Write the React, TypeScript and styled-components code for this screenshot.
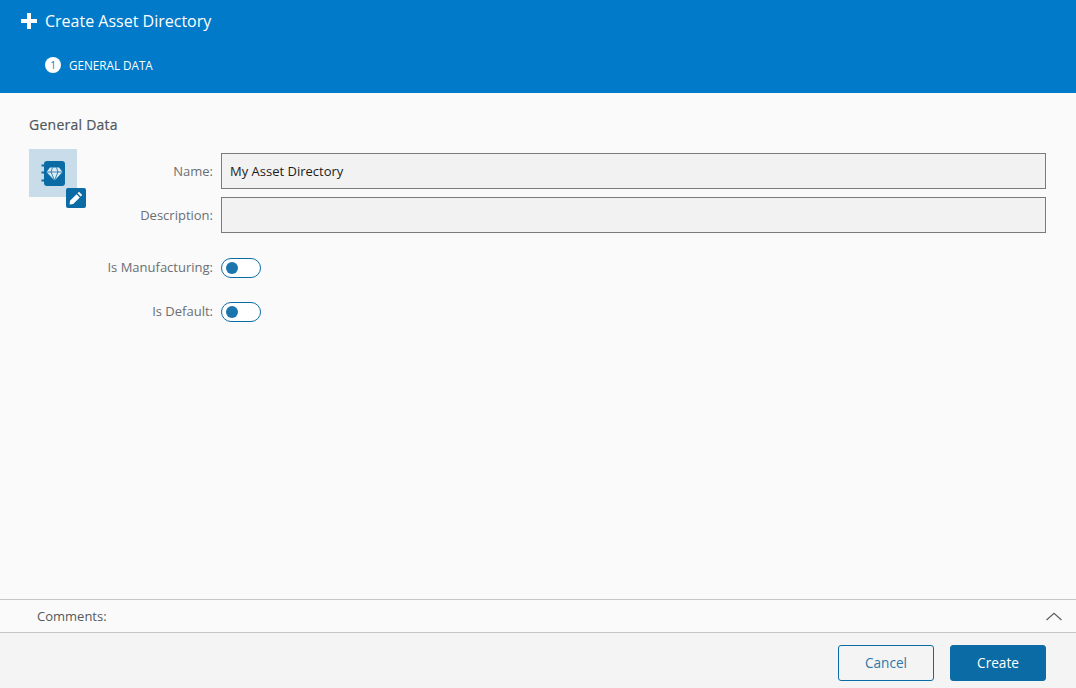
import React from "react";
import styled, { createGlobalStyle } from "styled-components";

const Global = createGlobalStyle`
  html, body { margin: 0; padding: 0; height: 100%; background: #fafafa; }
  #root { height: 100%; }
  * { box-sizing: border-box; }
`;

const Page = styled.div`
  width: 1076px;
  height: 688px;
  display: flex;
  flex-direction: column;
  overflow: hidden;
  font-family: "Open Sans", "Noto Sans", sans-serif;
  background: #fafafa;
  color: #50565a;
`;

const Header = styled.header`
  height: 93px;
  flex: none;
  background: #007ac9;
  color: #fff;
  padding: 10px 0 0 21px;
`;

const TitleRow = styled.div`
  display: flex;
  align-items: center;
  gap: 8px;
  height: 22px;
`;

const Title = styled.h1`
  margin: 0;
  font-size: 16px;
  font-weight: 400;
  line-height: 22px;
`;

const Steps = styled.div`
  display: flex;
  align-items: center;
  gap: 8px;
  margin: 23px 0 0 24px;
  height: 20px;
`;

const StepBadge = styled.span`
  width: 16px;
  height: 16px;
  border-radius: 50%;
  background: #fff;
  color: #007ac9;
  font-size: 10px;
  line-height: 16px;
  text-align: center;
`;

const StepLabel = styled.span`
  font-size: 11.7px;
  line-height: 16px;
`;

const Main = styled.main`
  flex: 1;
  padding: 23px 30px 0 29px;
`;

const SectionTitle = styled.h2`
  margin: 0 0 15px;
  font-size: 14px;
  line-height: 18px;
  font-weight: 500;
  letter-spacing: 0.25px;
  color: #50565a;
  -webkit-text-stroke: 0.2px #50565a;
`;

const FormLayout = styled.div`
  display: flex;
  align-items: flex-start;
`;

const IconBox = styled.div`
  position: relative;
  width: 48px;
  height: 48px;
  flex: none;
  background: #c8dce9;
  display: flex;
  align-items: center;
  justify-content: center;
`;

const EditBadge = styled.span`
  position: absolute;
  left: 37px;
  top: 39px;
  width: 20px;
  height: 20px;
  border-radius: 2px;
  background: #0b6ca5;
  display: flex;
  align-items: center;
  justify-content: center;
`;

const Fields = styled.div`
  flex: 1;
  display: grid;
  grid-template-columns: 136px 1fr;
  column-gap: 8px;
  padding-top: 4px;
`;

const Label = styled.label`
  font-size: 13px;
  line-height: 16px;
  text-align: right;
  align-self: center;
  color: #6a6f73;
`;

const InputLabel = styled(Label)`
  margin-bottom: 8px;
`;

const Input = styled.input`
  height: 36px;
  width: 100%;
  margin-bottom: 8px;
  border: 1px solid #7a7a7a;
  background: #f2f2f2;
  padding: 0 8px;
  font: 400 13px "Open Sans", sans-serif;
  color: #1c1c1c;
  outline: none;
`;

const ToggleCell = styled.div<{ $first?: boolean }>`
  height: 20px;
  margin: ${(p) => (p.$first ? "17px" : "24px")} 0 0;
`;

const ToggleLabel = styled(Label)<{ $first?: boolean }>`
  margin-top: ${(p) => (p.$first ? "17px" : "24px")};
  margin-bottom: 2px;
`;

const Toggle = styled.span`
  display: block;
  width: 40px;
  height: 20px;
  border: 1px solid #0b6ca5;
  border-radius: 10px;
  background: #fff;
  padding: 3px 4px;
`;

const Knob = styled.span`
  display: block;
  width: 12px;
  height: 12px;
  border-radius: 50%;
  background: #1a76ad;
`;

const CommentsBar = styled.div`
  height: 34px;
  flex: none;
  border-top: 1px solid #c6c6c6;
  border-bottom: 1px solid #c6c6c6;
  padding: 0 14px 0 37px;
  display: flex;
  align-items: center;
  justify-content: space-between;
  font-size: 13px;
  color: #55595c;
`;

const Footer = styled.footer`
  height: 55px;
  flex: none;
  background: #f4f4f4;
  display: flex;
  justify-content: flex-end;
  align-items: flex-start;
  gap: 16px;
  padding: 12px 30px 0 0;
`;

const Button = styled.button<{ $primary?: boolean }>`
  width: 96px;
  height: 36px;
  border-radius: 3px;
  border: 1px solid #0b6ca5;
  background: ${(p) => (p.$primary ? "#0b6ca5" : "transparent")};
  color: ${(p) => (p.$primary ? "#fff" : "#2c78a8")};
  font: 400 13.6px "Open Sans", sans-serif;
  padding: 0 0 2px;
`;

export default function App() {
  return (
    <Page>
      <Global />
      <Header>
        <TitleRow>
          <svg width="16" height="16" viewBox="0 0 16 16" aria-hidden="true">
            <path d="M6 0h4v6h6v4h-6v6H6v-6H0V6h6z" fill="#fff" />
          </svg>
          <Title>Create Asset Directory</Title>
        </TitleRow>
        <Steps>
          <StepBadge>1</StepBadge>
          <StepLabel>GENERAL DATA</StepLabel>
        </Steps>
      </Header>
      <Main>
        <SectionTitle>General Data</SectionTitle>
        <FormLayout>
          <IconBox>
            <svg width="24" height="25" viewBox="0 0 24 25" aria-hidden="true">
              <rect x="3" y="0" width="21" height="25" rx="3" fill="#0b6ca5" />
              <path d="M0.5 3.5h5v2h-5zM0.5 10.5h5v2h-5zM0.5 18.5h5v2h-5z" fill="#0b6ca5" />
              <path d="M9 6.5h9l3.5 4.5-8 8.5-8-8.5z" fill="#dcebf4" />
              <path d="M5.5 11h16M10 11l3.5 8.5L17 11M10 11l1.5-4.5M17 11l-1.5-4.5" stroke="#0b6ca5" strokeWidth="0.8" fill="none" />
            </svg>
            <EditBadge>
              <svg width="14" height="14" viewBox="0 0 14 14" aria-hidden="true">
                <path d="M10 .8l3.2 3.2-1.5 1.5-3.2-3.2zM7.6 3.2l3.2 3.2-6.6 6.6L.6 13.4l.4-3.6z" fill="#fff" />
              </svg>
            </EditBadge>
          </IconBox>
          <Fields>
            <InputLabel>Name:</InputLabel>
            <Input defaultValue="My Asset Directory" />
            <InputLabel>Description:</InputLabel>
            <Input />
            <ToggleLabel $first>Is Manufacturing:</ToggleLabel>
            <ToggleCell $first>
              <Toggle>
                <Knob />
              </Toggle>
            </ToggleCell>
            <ToggleLabel>Is Default:</ToggleLabel>
            <ToggleCell>
              <Toggle>
                <Knob />
              </Toggle>
            </ToggleCell>
          </Fields>
        </FormLayout>
      </Main>
      <CommentsBar>
        <span>Comments:</span>
        <svg width="16" height="9" viewBox="0 0 16 9" aria-hidden="true">
          <path d="M0.5 8L8 1.2 15.5 8" fill="none" stroke="#5a5f63" strokeWidth="1.2" />
        </svg>
      </CommentsBar>
      <Footer>
        <Button>Cancel</Button>
        <Button $primary>Create</Button>
      </Footer>
    </Page>
  );
}
